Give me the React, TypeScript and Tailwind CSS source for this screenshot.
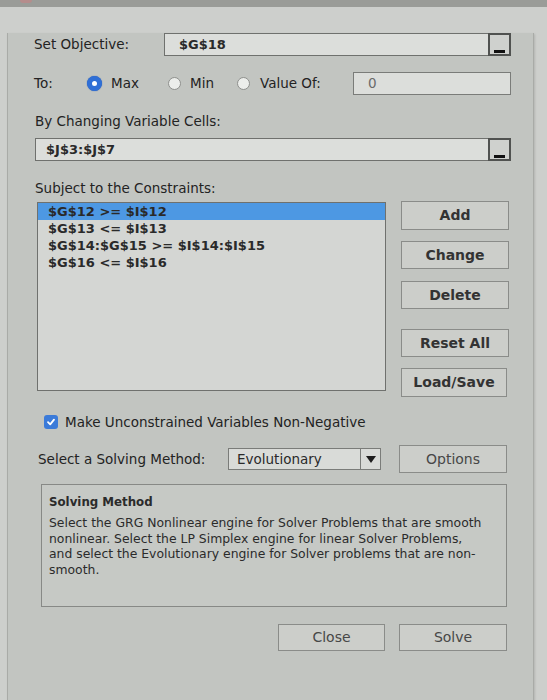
import React from 'react';

const FONT = { fontFamily: '"DejaVu Sans", Verdana, sans-serif' };

function RangeField({ value, width, pl }: { value: string; width: string; pl: string }) {
  return (
    <div className={`flex h-[23px] ${width}`}>
      <div className={`flex-1 flex items-center bg-[#dcdedb] border border-[#6f716e] border-r-0 ${pl} text-[13px] font-bold text-[#2a2a2a]`}>
        {value}
      </div>
      <div className="w-[23px] h-full border-2 border-[#505250] bg-[#cfd1ce] flex items-end justify-center">
        <div className="w-[11px] h-[3px] bg-[#111] mb-[1px]" />
      </div>
    </div>
  );
}

function Radio({ on }: { on?: boolean }) {
  return on ? (
    <div className="w-[15px] h-[15px] rounded-full bg-[#2f6fd6] flex items-center justify-center shadow-[0_0_1px_#1c4ea3]">
      <div className="w-[5px] h-[5px] rounded-full bg-white" />
    </div>
  ) : (
    <div className="w-[13px] h-[13px] rounded-full bg-[#eceeeb] border border-[#8e908d]" />
  );
}

function Btn({ label, className = '', bold = true }: { label: string; className?: string; bold?: boolean }) {
  return (
    <div className={`flex items-center justify-center bg-[#ccceca] border border-[#8a8c89] text-[14px] ${bold ? 'text-[#333]' : 'text-[#474747]'} ${className}`}>
      {label}
    </div>
  );
}

const CONSTRAINTS = ['$G$12 >= $I$12', '$G$13 <= $I$13', '$G$14:$G$15 >= $I$14:$I$15', '$G$16 <= $I$16'];

export default function App() {
  return (
    <div className="w-[547px] h-[700px] bg-[#cdcfcc] overflow-hidden relative" style={FONT}>
      {/* title bar edge */}
      <div className="h-[7px] bg-[#9a9c98] relative">
        <div className="absolute left-[20px] top-0 w-[12px] h-[3px] rounded-b-full bg-[#b58d8c]" />
      </div>

      <div className="ml-[7px] w-[527px] h-[670px] bg-[#c2c5c1] border-l border-r border-b border-[#a9aba7] shadow-[1px_1px_2px_#b3b5b2] text-[13.5px] text-[#232323]">
        {/* Set Objective */}
        <div className="flex items-center mt-[26px] pl-[26px]">
          <div className="w-[130px]">Set Objective:</div>
          <RangeField value="$G$18" width="w-[347px]" pl="pl-[14px]" />
        </div>

        {/* To */}
        <div className="flex items-center mt-[16px] pl-[26px] h-[23px]">
          <div className="w-[53px]">To:</div>
          <Radio on />
          <div className="ml-[9px] w-[57px]">Max</div>
          <Radio />
          <div className="ml-[9px] w-[47px]">Min</div>
          <Radio />
          <div className="ml-[10px] w-[93px]">Value Of:</div>
          <div className="w-[158px] h-[23px] bg-[#dcdedb] border border-[#7a7c79] flex items-center pl-[14px] text-[#6a6a6a]">0</div>
        </div>

        {/* Changing cells */}
        <div className="mt-[18px] pl-[27px] h-[16px] leading-[16px]">By Changing Variable Cells:</div>
        <div className="mt-[9px] pl-[27px]">
          <RangeField value="$J$3:$J$7" width="w-[476px]" pl="pl-[10px]" />
        </div>

        {/* Constraints */}
        <div className="mt-[19px] pl-[27px] h-[16px] leading-[16px]">Subject to the Constraints:</div>
        <div className="flex items-start mt-[6px] pl-[29px] h-[189px]">
          <div className="w-[349px] h-[189px] bg-[#d4d6d3] border border-[#6f716e] text-[13px] font-bold text-[#2a2a2a]">
            {CONSTRAINTS.map((c, i) => (
              <div key={c} className={`h-[17px] leading-[17px] pl-[10px] whitespace-nowrap ${i === 0 ? 'bg-[#4d98e3]' : ''}`}>
                {c}
              </div>
            ))}
          </div>
          <div className="ml-[15px] flex flex-col -mt-[1px]">
            <Btn label="Add" className="w-[108px] h-[29px] font-bold" />
            <Btn label="Change" className="w-[108px] h-[28px] mt-[11px] font-bold" />
            <Btn label="Delete" className="w-[108px] h-[28px] mt-[12px] font-bold" />
            <Btn label="Reset All" className="w-[108px] h-[28px] mt-[20px] font-bold" />
            <Btn label="Load/Save" className="w-[106px] h-[29px] mt-[11px] font-bold" />
          </div>
        </div>

        {/* Non-negative */}
        <div className="flex items-center mt-[23px] pl-[36px] h-[16px]">
          <div className="w-[14px] h-[14px] rounded-[3px] bg-[#3b7bd9] flex items-center justify-center">
            <svg width="10" height="10" viewBox="0 0 10 10">
              <path d="M2 5.2 L4.2 7.4 L8 2.6" fill="none" stroke="#fff" strokeWidth="1.8" strokeLinecap="round" strokeLinejoin="round" />
            </svg>
          </div>
          <div className="ml-[7px]">Make Unconstrained Variables Non-Negative</div>
        </div>

        {/* Solving method */}
        <div className="flex items-center mt-[15px] pl-[30px] h-[28px]">
          <div className="w-[190px]">Select a Solving Method:</div>
          <div className="w-[153px] h-[22px] flex bg-[#d9dbd8] border border-[#7a7c79]">
            <div className="flex-1 flex items-center pl-[8px] text-[#2a2a2a]">Evolutionary</div>
            <div className="w-[20px] border-l border-[#7a7c79] flex items-center justify-center">
              <svg width="10" height="7" viewBox="0 0 10 7">
                <path d="M0 0 H10 L5 7 Z" fill="#1d1d1d" />
              </svg>
            </div>
          </div>
          <Btn label="Options" bold={false} className="ml-[18px] w-[108px] h-[28px] text-[#333]" />
        </div>

        {/* Description */}
        <div className="mt-[11px] ml-[33px] w-[466px] h-[123px] border border-[#878986] bg-[#c6c9c5] pl-[7px] pt-[9px] text-[12.4px] text-[#2b2b2b]">
          <div className="font-bold leading-[16px] text-[11.8px]">Solving Method</div>
          <div className="mt-[5px] leading-[15.7px] whitespace-nowrap">
            <div>Select the GRG Nonlinear engine for Solver Problems that are smooth</div>
            <div>nonlinear. Select the LP Simplex engine for linear Solver Problems,</div>
            <div>and select the Evolutionary engine for Solver problems that are non-</div>
            <div>smooth.</div>
          </div>
        </div>

        {/* Footer */}
        <div className="flex mt-[17px] pl-[270px]">
          <Btn label="Close" bold={false} className="w-[107px] h-[27px]" />
          <Btn label="Solve" bold={false} className="ml-[14px] w-[108px] h-[27px]" />
        </div>
      </div>
    </div>
  );
}
